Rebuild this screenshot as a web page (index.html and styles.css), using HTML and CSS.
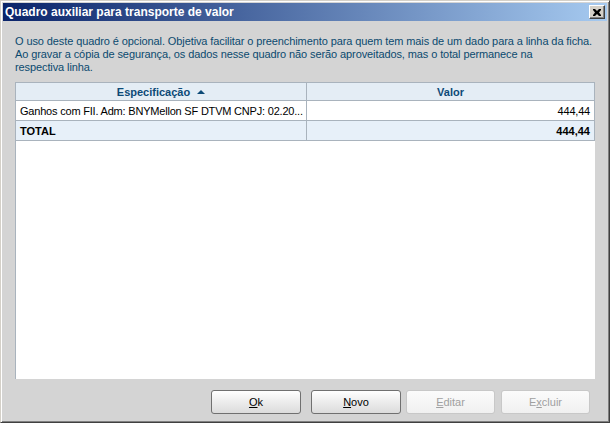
FILE: index.html
```html
<!DOCTYPE html>
<html lang="pt-BR">
<head>
  <meta charset="UTF-8" />
  <title>Quadro auxiliar para transporte de valor</title>
  <link rel="stylesheet" href="styles.css">
</head>
<body>
  <div class="window">
    <div class="title-bar">
      <span class="title">Quadro auxiliar para transporte de valor</span>
      <button class="close-btn" title="Fechar">
        <svg width="8" height="7" viewBox="0 0 8 7">
          <path d="M0 0h2l2 2 2-2h2v1L6 3.5 8 6v1H6L4 5 2 7H0V6l2-2.5L0 1z" fill="#000"/>
        </svg>
      </button>
    </div>

    <div class="content">
      <p class="info">O uso deste quadro é opcional. Objetiva facilitar o preenchimento para quem tem mais de um dado para a linha da ficha.<br>Ao gravar a cópia de segurança, os dados nesse quadro não serão aproveitados, mas o total permanece na<br>respectiva linha.</p>

      <div class="grid">
        <div class="row head">
          <div class="cell spec">Especificação <span class="sort"></span></div>
          <div class="cell val">Valor</div>
        </div>
        <div class="row item">
          <div class="cell spec">Ganhos com FII. Adm: BNYMellon SF DTVM CNPJ: 02.20...</div>
          <div class="cell val">444,44</div>
        </div>
        <div class="row total">
          <div class="cell spec">TOTAL</div>
          <div class="cell val">444,44</div>
        </div>
      </div>

      <div class="actions">
        <button class="btn btn-ok"><u>O</u>k</button>
        <button class="btn btn-novo"><u>N</u>ovo</button>
        <button class="btn btn-editar" disabled><u>E</u>ditar</button>
        <button class="btn btn-excluir" disabled>E<u>x</u>cluir</button>
      </div>
    </div>
  </div>
</body>
</html>
```

FILE: styles.css
```css
html, body {
  margin: 0;
  padding: 0;
}
body {
  width: 610px;
  height: 423px;
  background: #d4d4d4;
  font-family: "Liberation Sans", Arial, sans-serif;
  font-size: 11px;
  overflow: hidden;
}
.window {
  box-sizing: border-box;
  width: 610px;
  height: 423px;
  border-top: 1px solid #d4d0c8;
  border-left: 1px solid #d4d0c8;
  border-right: 1px solid #404040;
  border-bottom: 1px solid #404040;
  box-shadow: inset 1px 1px 0 #ffffff, inset -1px -1px 0 #808080;
  padding: 2px;
  display: flex;
  flex-direction: column;
}
.title-bar {
  height: 18px;
  display: flex;
  align-items: center;
  justify-content: space-between;
  padding: 0 2px 0 2px;
  background: linear-gradient(to right, #0a246a, #a6caf0);
}
.title {
  color: #fff;
  font-weight: bold;
  font-size: 12px;
}
.close-btn {
  box-sizing: border-box;
  width: 16px;
  height: 14px;
  padding: 0;
  margin: 0;
  background: #d4d0c8;
  border: 1px solid;
  border-color: #ffffff #404040 #404040 #ffffff;
  box-shadow: inset -1px -1px 0 #808080;
  display: flex;
  align-items: center;
  justify-content: center;
}
.content {
  flex: 1;
  display: flex;
  flex-direction: column;
  padding: 14px 12px 0 12px;
}
.info {
  margin: 0;
  color: #0b4a6f;
  line-height: 13px;
  white-space: nowrap;
  letter-spacing: -0.1px;
}
.grid {
  margin-top: 8px;
  height: 297px;
  box-sizing: border-box;
  background: #fff;
  border-left: 1px solid #a9b3bd;
}
.row {
  display: flex;
  height: 20px;
  box-sizing: border-box;
  border-bottom: 1px solid #a9b3bd;
}
.row.head {
  height: 19px;
  border-top: 1px solid #a9b3bd;
  background: #e4edf5;
  color: #0d4a77;
  font-weight: bold;
}
.row.total {
  background: #e7f0f9;
  font-weight: bold;
}
.cell {
  display: flex;
  align-items: center;
  box-sizing: border-box;
  padding: 0 4px;
  white-space: nowrap;
  overflow: hidden;
}
.item .cell {
  letter-spacing: -0.2px;
}
.cell.spec {
  width: 291px;
  border-right: 1px solid #a9b3bd;
}
.cell.val {
  flex: 1;
  justify-content: flex-end;
  border-right: 1px solid #a9b3bd;
}
.head .cell {
  justify-content: center;
}
.sort {
  display: inline-block;
  width: 0;
  height: 0;
  margin-left: 7px;
  border-left: 4px solid transparent;
  border-right: 4px solid transparent;
  border-bottom: 4px solid #0d4a77;
}
.actions {
  display: flex;
  justify-content: flex-end;
  margin-top: 11px;
  padding-right: 5px;
}
.btn {
  height: 24px;
  padding: 0;
  font-family: "Liberation Sans", Arial, sans-serif;
  font-size: 11px;
  color: #000;
  border: 1px solid #707070;
  border-radius: 3px;
  background: linear-gradient(#ffffff, #ececec 50%, #dcdcdc);
}
.btn u {
  text-decoration: underline;
}
.btn:disabled {
  color: #a0a0a0;
  border-color: #c8c8c8;
  background: linear-gradient(#fbfbfb, #f0f0f0);
}
.btn-ok { width: 90px; margin-right: 10px; }
.btn-novo { width: 90px; margin-right: 5px; }
.btn-editar { width: 89px; margin-right: 6px; }
.btn-excluir { width: 89px; }
```
